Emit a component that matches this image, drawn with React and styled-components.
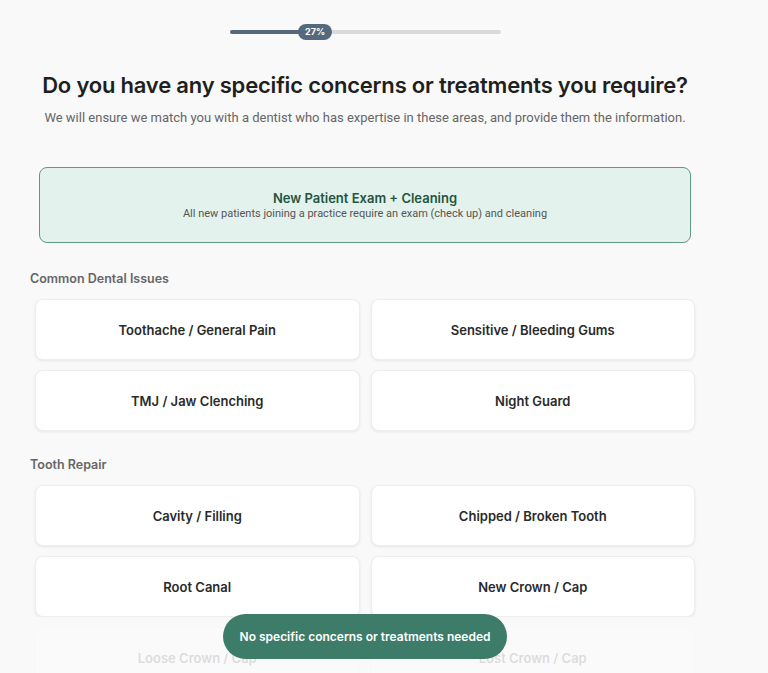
import React from "react";
import styled, { createGlobalStyle } from "styled-components";

const Global = createGlobalStyle`
  html, body { margin: 0; padding: 0; background: #f9f9f9; overflow: hidden; }
  body { font-family: "Inter", "Noto Sans", sans-serif; color: #222; }
  * { box-sizing: border-box; }
`;

const Main = styled.main`
  width: 670px;
  margin-left: 30px;
  padding-top: 24px;
  padding-bottom: 80px;
  display: flex;
  flex-direction: column;
`;

const ProgressWrap = styled.div`
  position: relative;
  width: 271px;
  height: 16px;
  margin: 0 auto;
  display: flex;
  align-items: center;
`;

const Track = styled.div`
  width: 100%;
  height: 4px;
  border-radius: 2px;
  background: #d9dadc;
  overflow: hidden;
`;

const Fill = styled.div`
  height: 100%;
  background: #55697d;
`;

const Pill = styled.div`
  position: absolute;
  top: 0;
  transform: translateX(-50%);
  height: 16px;
  padding: 0 7px;
  border-radius: 8px;
  background: #55697d;
  color: #fff;
  font-size: 9px;
  font-weight: 700;
  line-height: 16px;
`;

const Title = styled.h1`
  margin: 30px 0 0;
  text-align: center;
  font-size: 22px;
  font-weight: 600;
  letter-spacing: -0.2px;
  color: #1f1f1f;
  line-height: 30px;
`;

const Subtitle = styled.p`
  margin: 9px 0 0;
  text-align: center;
  font-family: "Roboto", sans-serif;
  font-size: 13px;
  color: #666;
  line-height: 18px;
`;

const FeatureCard = styled.div`
  margin: 40px 9px 0;
  height: 76px;
  border: 1px solid #5f9b82;
  border-radius: 8px;
  background: #e3f2ec;
  display: flex;
  flex-direction: column;
  align-items: center;
  justify-content: center;
  gap: 1px;
`;

const FeatureTitle = styled.div`
  font-size: 13px;
  font-weight: 600;
  color: #24553f;
`;

const FeatureSub = styled.div`
  font-family: "Roboto", sans-serif;
  font-size: 11px;
  color: #555;
`;

const SectionLabel = styled.h2`
  margin: ${(p) => p.$top}px 0 0;
  font-size: 12.5px;
  font-weight: 600;
  color: #666;
  line-height: 18px;
`;

const Grid = styled.div`
  margin-top: 11px;
  padding: 0 5px;
  display: grid;
  grid-template-columns: 1fr 1fr;
  gap: 10px 11px;
`;

const Option = styled.button`
  height: 61px;
  border: 1px solid #eeeeee;
  border-radius: 8px;
  background: #fff;
  box-shadow: 0 1px 3px rgba(0, 0, 0, 0.08);
  font-family: "Inter", sans-serif;
  font-size: 13px;
  font-weight: 600;
  color: #2a2a2a;
  cursor: pointer;
`;

const Footer = styled.div`
  position: fixed;
  left: 0;
  right: 0;
  bottom: 0;
  height: 56px;
  background: rgba(249, 249, 249, 0.86);
`;

const FooterInner = styled.div`
  width: 670px;
  margin-left: 30px;
  display: flex;
  justify-content: center;
`;

const NoneButton = styled.button`
  margin-top: -3px;
  height: 45px;
  padding: 0 17px;
  border: none;
  border-radius: 23px;
  background: #3d7c68;
  color: #fff;
  font-family: "Inter", sans-serif;
  font-size: 12px;
  font-weight: 600;
  cursor: pointer;
`;

const sections = [
  {
    label: "Common Dental Issues",
    top: 27,
    items: ["Toothache / General Pain", "Sensitive / Bleeding Gums", "TMJ / Jaw Clenching", "Night Guard"],
  },
  {
    label: "Tooth Repair",
    top: 25,
    items: ["Cavity / Filling", "Chipped / Broken Tooth", "Root Canal", "New Crown / Cap", "Loose Crown / Cap", "Lost Crown / Cap"],
  },
];

export default function App() {
  const pct = 27;
  return (
    <>
      <Global />
      <Main>
        <ProgressWrap>
          <Track>
            <Fill style={{ width: `${pct * 1.17}%` }} />
          </Track>
          <Pill style={{ left: `${pct * 1.17}%` }}>{pct}%</Pill>
        </ProgressWrap>
        <Title>Do you have any specific concerns or treatments you require?</Title>
        <Subtitle>
          We will ensure we match you with a dentist who has expertise in these areas, and provide them the information.
        </Subtitle>
        <FeatureCard>
          <FeatureTitle>New Patient Exam + Cleaning</FeatureTitle>
          <FeatureSub>All new patients joining a practice require an exam (check up) and cleaning</FeatureSub>
        </FeatureCard>
        {sections.map((s) => (
          <React.Fragment key={s.label}>
            <SectionLabel $top={s.top}>{s.label}</SectionLabel>
            <Grid>
              {s.items.map((it) => (
                <Option key={it}>{it}</Option>
              ))}
            </Grid>
          </React.Fragment>
        ))}
      </Main>
      <Footer>
        <FooterInner>
          <NoneButton>No specific concerns or treatments needed</NoneButton>
        </FooterInner>
      </Footer>
    </>
  );
}
